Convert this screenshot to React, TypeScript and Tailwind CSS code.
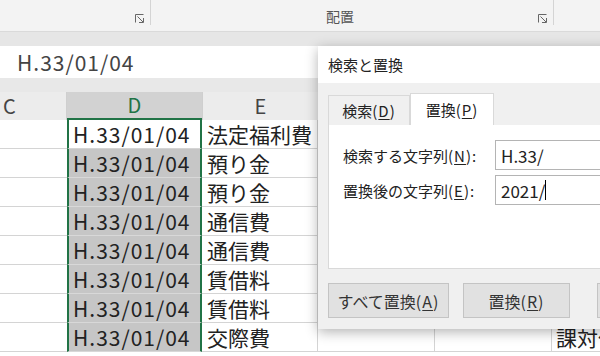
import React from "react";

const rows: { d: string; e: string; h?: string }[] = [
  { d: "H.33/01/04", e: "法定福利費" },
  { d: "H.33/01/04", e: "預り金" },
  { d: "H.33/01/04", e: "預り金" },
  { d: "H.33/01/04", e: "通信費" },
  { d: "H.33/01/04", e: "通信費" },
  { d: "H.33/01/04", e: "賃借料" },
  { d: "H.33/01/04", e: "賃借料" },
  { d: "H.33/01/04", e: "交際費", h: "課対仕入" },
];

const Launcher = () => (
  <svg width="11" height="11" viewBox="0 0 11 11" fill="none" stroke="#666" strokeWidth="1">
    <path d="M1.5 9.5V1.5H9.5" />
    <path d="M3.5 3.5L9 9" />
    <path d="M5 9.5H9.5V5" />
  </svg>
);

// mnemonic key like (D), with the letter underlined
const Key = ({ k, colon }: { k: string; colon?: boolean }) => (
  <span className="tracking-[1px]">
    (<span className="underline underline-offset-2">{k}</span>){colon ? ":" : ""}
  </span>
);

const App: React.FC = () => {
  return (
    <div className="relative w-[600px] h-[356px] overflow-hidden bg-white font-['Noto_Sans_CJK_JP',sans-serif] text-[#222]">
      {/* ribbon */}
      <div className="h-[31px] bg-[#f3f3f3] flex items-start">
        <div className="w-[151px] h-[25px] border-r border-[#d4d4d4] flex items-end justify-end pr-[5px] pb-[1px]">
          <Launcher />
        </div>
        <div className="w-[403px] h-[25px] border-r border-[#d4d4d4] flex items-end">
          <span className="ml-[175px] text-[14px] leading-none text-[#555] mb-[2px]">配置</span>
          <span className="ml-auto mr-[5px] mb-[1px]">
            <Launcher />
          </span>
        </div>
      </div>

      {/* band */}
      <div className="h-[15px] bg-[#e6e6e6] border-t border-[#dadada]" />

      {/* formula bar */}
      <div className="h-[32px] bg-white flex items-center pl-[17px] text-[21px] leading-none text-[#444] tracking-[1px]">
        H.33/01/04
      </div>

      <div className="h-[14px] bg-[#e8e8e8]" />

      {/* column headers */}
      <div className="grid grid-cols-[67px_135px_116px_117px_117px_1fr] h-[28px] bg-[#ececec] text-[20px] leading-none text-[#444]">
        <div className="flex items-center pl-[3px] border-r border-[#cfcfcf]">C</div>
        <div className="flex items-center justify-center bg-[#d2d2d2] border-b-2 border-[#217346] text-[#217346]">D</div>
        <div className="flex items-center justify-center border-l border-[#cfcfcf]">E</div>
        <div className="flex items-center justify-center border-l border-[#cfcfcf]">F</div>
        <div className="flex items-center justify-center border-l border-[#cfcfcf]">G</div>
        <div className="flex items-center justify-center border-l border-[#cfcfcf]">H</div>
      </div>

      {/* cells */}
      <div className="text-[21px] leading-none">
        {rows.map((r, i) => (
          <div key={i} className="grid grid-cols-[67px_135px_116px_117px_117px_1fr] h-[29px]">
            <div className="border-b border-[#d4d4d4]" />
            <div
              className={
                "flex items-center pl-[4px] pt-[1px] border-x-2 border-x-[#217346] border-b tracking-[1px] " +
                (i === 0 ? "bg-white border-b-[#d4d4d4]" : "bg-[#c6c6c6] border-b-[#d8d8d8]")
              }
            >
              {r.d}
            </div>
            <div className="flex items-center pl-[5px] pt-[1px] border-b border-r border-[#d4d4d4] whitespace-nowrap">
              {r.e}
            </div>
            <div className="border-b border-r border-[#d4d4d4]" />
            <div className="border-b border-r border-[#d4d4d4]" />
            <div className="flex items-center pl-[4px] pt-[1px] border-b border-[#d4d4d4] whitespace-nowrap overflow-hidden">
              {r.h}
            </div>
          </div>
        ))}
      </div>

      {/* find & replace dialog */}
      <div className="absolute left-[318px] top-[46px] w-[420px] h-[283px] bg-[#f0f0f0] shadow-[0_3px_12px_rgba(0,0,0,0.3)] text-[15px] leading-none text-[#222] flex flex-col">
        <div className="h-[37px] bg-white flex items-center pl-[10px]">検索と置換</div>

        <div className="pl-[10px] pt-[10px] flex flex-col">
          <div className="flex items-end h-[32px]">
            <div className="shrink-0 w-[82px] h-[30px] border border-b-0 border-[#d9d9d9] flex items-center justify-center">
              検索<Key k="D" />
            </div>
            <div className="shrink-0 w-[84px] h-[32px] bg-white border border-b-0 border-[#d9d9d9] flex items-center justify-center">
              置換<Key k="P" />
            </div>
          </div>

          <div className="h-[144px] bg-white border border-t-0 border-[#d9d9d9] pt-[15px] flex flex-col gap-[5px]">
            <div className="flex items-center h-[30px]">
              <span className="shrink-0 w-[166px] pl-[14px] whitespace-nowrap">
                検索する文字列<Key k="N" colon />
              </span>
              <div className="flex-1 h-[30px] border border-[#b4b4b4] flex items-center pl-[5px] text-[17px]">H.33/</div>
            </div>
            <div className="flex items-center h-[30px]">
              <span className="shrink-0 w-[166px] pl-[14px] whitespace-nowrap">
                置換後の文字列<Key k="E" colon />
              </span>
              <div className="flex-1 h-[30px] border border-[#b4b4b4] flex items-center pl-[5px] text-[17px]">
                2021/<span className="w-px h-[20px] bg-black" />
              </div>
            </div>
          </div>

          <div className="flex mt-[14px]">
            <button className="shrink-0 w-[121px] h-[35px] bg-[#e1e1e1] border border-[#c4c4c4] text-[#333] text-[16px]">
              すべて置換<Key k="A" />
            </button>
            <button className="shrink-0 ml-[14px] w-[107px] h-[35px] bg-[#e1e1e1] border border-[#c4c4c4] text-[#333] text-[16px]">
              置換<Key k="R" />
            </button>
            <button className="shrink-0 ml-[27px] w-[107px] h-[35px] bg-[#e1e1e1] border border-[#c4c4c4]" />
          </div>
        </div>
      </div>
    </div>
  );
};

export default App;
